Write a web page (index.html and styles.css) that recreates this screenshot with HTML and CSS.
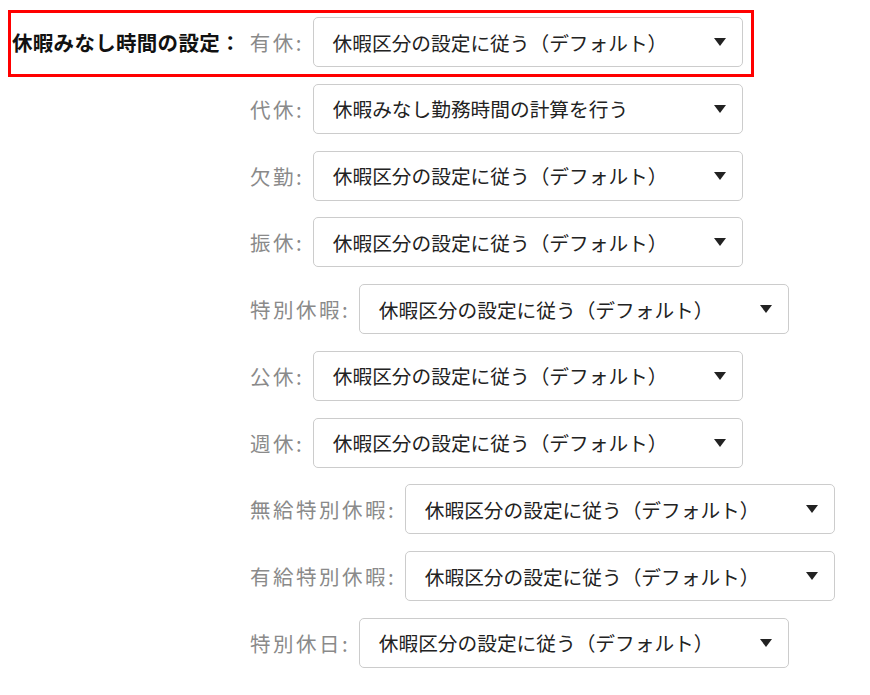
FILE: index.html
```html
<!DOCTYPE html>
<html lang="ja">
<head>
<meta charset="utf-8">
<link rel="stylesheet" href="styles.css">
</head>
<body>
<div class="settings">
  <div class="highlight">
    <div class="heading">休暇みなし時間の設定：</div>
    <div class="row">
      <span class="label">有休:</span>
      <div class="select"><span class="value">休暇区分の設定に従う（デフォルト）</span><svg class="arrow" width="12" height="8" viewBox="0 0 12 8"><polygon points="0,0 12,0 6,8" fill="#222"/></svg></div>
    </div>
  </div>
  <div class="row indent">
    <span class="label">代休:</span>
    <div class="select"><span class="value">休暇みなし勤務時間の計算を行う</span><svg class="arrow" width="12" height="8" viewBox="0 0 12 8"><polygon points="0,0 12,0 6,8" fill="#222"/></svg></div>
  </div>
  <div class="row indent">
    <span class="label">欠勤:</span>
    <div class="select"><span class="value">休暇区分の設定に従う（デフォルト）</span><svg class="arrow" width="12" height="8" viewBox="0 0 12 8"><polygon points="0,0 12,0 6,8" fill="#222"/></svg></div>
  </div>
  <div class="row indent">
    <span class="label">振休:</span>
    <div class="select"><span class="value">休暇区分の設定に従う（デフォルト）</span><svg class="arrow" width="12" height="8" viewBox="0 0 12 8"><polygon points="0,0 12,0 6,8" fill="#222"/></svg></div>
  </div>
  <div class="row indent">
    <span class="label">特別休暇:</span>
    <div class="select"><span class="value">休暇区分の設定に従う（デフォルト）</span><svg class="arrow" width="12" height="8" viewBox="0 0 12 8"><polygon points="0,0 12,0 6,8" fill="#222"/></svg></div>
  </div>
  <div class="row indent">
    <span class="label">公休:</span>
    <div class="select"><span class="value">休暇区分の設定に従う（デフォルト）</span><svg class="arrow" width="12" height="8" viewBox="0 0 12 8"><polygon points="0,0 12,0 6,8" fill="#222"/></svg></div>
  </div>
  <div class="row indent">
    <span class="label">週休:</span>
    <div class="select"><span class="value">休暇区分の設定に従う（デフォルト）</span><svg class="arrow" width="12" height="8" viewBox="0 0 12 8"><polygon points="0,0 12,0 6,8" fill="#222"/></svg></div>
  </div>
  <div class="row indent">
    <span class="label">無給特別休暇:</span>
    <div class="select"><span class="value">休暇区分の設定に従う（デフォルト）</span><svg class="arrow" width="12" height="8" viewBox="0 0 12 8"><polygon points="0,0 12,0 6,8" fill="#222"/></svg></div>
  </div>
  <div class="row indent">
    <span class="label">有給特別休暇:</span>
    <div class="select"><span class="value">休暇区分の設定に従う（デフォルト）</span><svg class="arrow" width="12" height="8" viewBox="0 0 12 8"><polygon points="0,0 12,0 6,8" fill="#222"/></svg></div>
  </div>
  <div class="row indent">
    <span class="label">特別休日:</span>
    <div class="select"><span class="value">休暇区分の設定に従う（デフォルト）</span><svg class="arrow" width="12" height="8" viewBox="0 0 12 8"><polygon points="0,0 12,0 6,8" fill="#222"/></svg></div>
  </div>
</div>
</body>
</html>
```
FILE: styles.css
```css
html, body {
  margin: 0;
  padding: 0;
  background: #ffffff;
}

body {
  font-family: "Noto Sans CJK JP", "Noto Sans", sans-serif;
  width: 870px;
  height: 695px;
  overflow: hidden;
}

.settings {
  display: flex;
  flex-direction: column;
  align-items: flex-start;
  padding-left: 8px;
}

.highlight {
  display: flex;
  align-items: center;
  margin-top: 10px;
  margin-bottom: 6.8px;
  padding: 4px 8px 7px 1px;
  border: 3px solid #ff0000;
}

.heading {
  font-size: 20.5px;
  font-weight: bold;
  letter-spacing: 0.3px;
  color: #111111;
  margin-right: 9px;
  white-space: nowrap;
}

.row {
  display: flex;
  align-items: center;
  height: 50px;
}

.row.indent {
  margin-left: 242px;
  margin-bottom: 16.78px;
}

.label {
  font-size: 20.5px;
  letter-spacing: 2.5px;
  color: #8a8a8a;
  margin-right: 8.6px;
  white-space: nowrap;
}

.select {
  box-sizing: border-box;
  width: 430px;
  height: 50px;
  border: 1px solid #cccccc;
  border-radius: 5px;
  background: #ffffff;
  display: flex;
  align-items: center;
  justify-content: space-between;
  padding: 0 16px 0 19px;
}

.value {
  font-size: 19.7px;
  color: #222222;
  white-space: nowrap;
}

.arrow {
  display: block;
  flex: none;
}
```
